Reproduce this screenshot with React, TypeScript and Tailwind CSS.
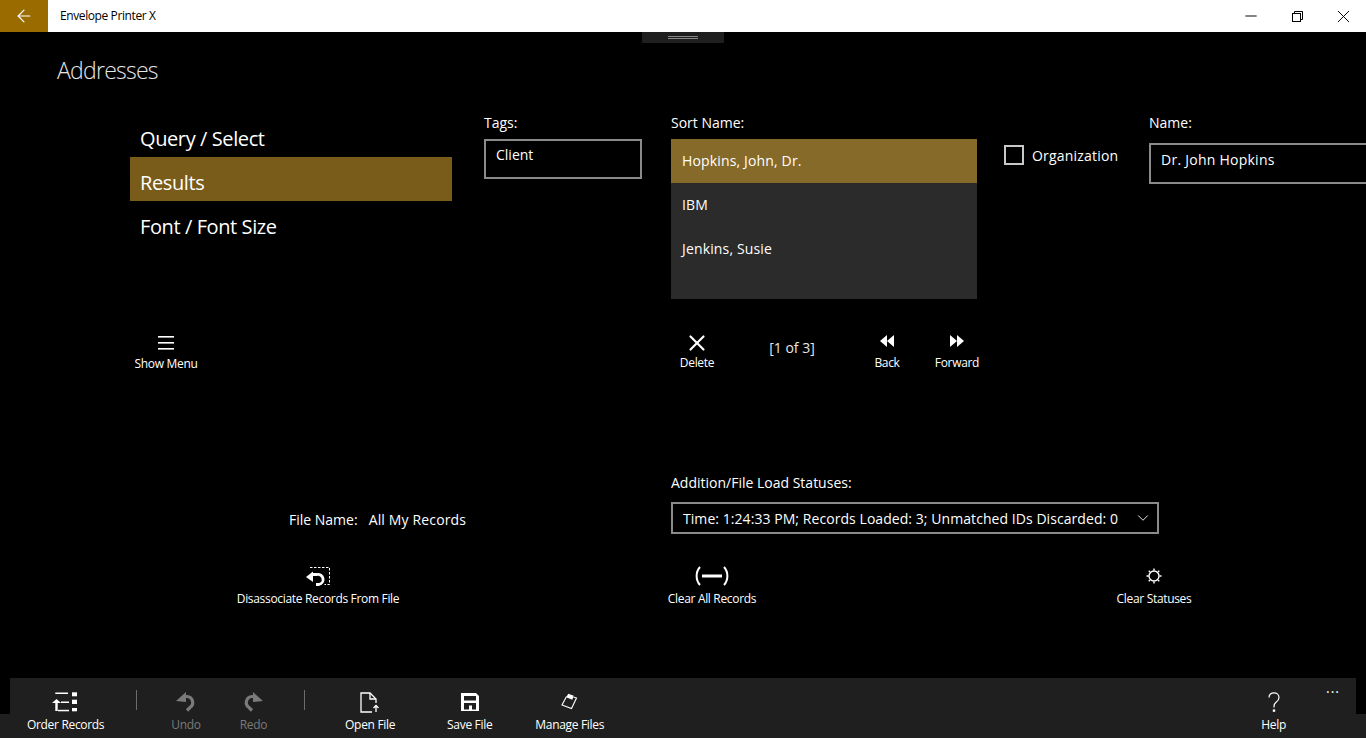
import { ArrowLeft, ChevronDown, Minus, X } from "lucide-react";
import type { ReactNode } from "react";

const font = "font-['Open_Sans','Noto_Sans',sans-serif]";

function NavItem({ text, active }: { text: string; active?: boolean }) {
  return (
    <div className={`flex h-11 items-center px-[10px] pt-2 text-[20px] tracking-[-0.4px] text-white ${active ? "bg-[#7a5c1a]" : ""}`}>
      {text}
    </div>
  );
}

function SortItem({ text, active }: { text: string; active?: boolean }) {
  return (
    <div className={`flex h-11 items-center px-[11px] pb-[2px] text-[14px] tracking-[0.15px] text-white ${active ? "bg-[#866a2a]" : ""}`}>
      {text}
    </div>
  );
}

function Action({
  icon,
  label,
  className = "",
  labelClassName = "",
  muted,
}: {
  icon: ReactNode;
  label: string;
  className?: string;
  labelClassName?: string;
  muted?: boolean;
}) {
  return (
    <div className={`flex flex-col items-center ${muted ? "text-[#7a7a7a]" : "text-white"} ${className}`}>
      <div className="flex h-[22px] items-center justify-center">{icon}</div>
      <div className={`whitespace-nowrap text-[12px] leading-[16px] tracking-[-0.32px] ${labelClassName}`}>{label}</div>
    </div>
  );
}

function Hamburger() {
  return (
    <svg width="16" height="16" viewBox="0 0 16 16" fill="currentColor">
      <rect x="0" y="1" width="16" height="1.6" />
      <rect x="0" y="7" width="16" height="1.6" />
      <rect x="0" y="13" width="16" height="1.6" />
    </svg>
  );
}

function BackIcon() {
  return (
    <svg width="14" height="12" viewBox="0 0 14 12" fill="currentColor">
      <path d="M7 0v12L0 6z" />
      <path d="M14 0v12L7 6z" />
    </svg>
  );
}

function ForwardIcon() {
  return (
    <svg width="14" height="12" viewBox="0 0 14 12" fill="currentColor">
      <path d="M0 0v12l7-6z" />
      <path d="M7 0v12l7-6z" />
    </svg>
  );
}

function DisassociateIcon() {
  return (
    <svg width="24" height="20" viewBox="0 0 24 20" fill="none" stroke="currentColor">
      <path d="M4 1.500h19.500v17h-5" strokeDasharray="2.500 1.500" />
      <path d="M6 8.500h5a5 5 0 0 1 2 10h-3" strokeWidth="2.800" />
      <path d="M7 5.500v10.500L0 11z" fill="currentColor" stroke="none" />
    </svg>
  );
}

function ClearIcon() {
  return (
    <svg width="34" height="20" viewBox="0 0 34 20" fill="none" stroke="currentColor">
      <path d="M5 1C0.500 6 0.500 14 5 19" strokeWidth="2" />
      <path d="M29 1c4.500 5 4.500 13 0 18" strokeWidth="2" />
      <path d="M7 10h20" strokeWidth="3" />
    </svg>
  );
}

function GearIcon() {
  return (
    <svg width="18" height="18" viewBox="0 0 18 18" fill="none" stroke="currentColor">
      <circle cx="9" cy="9" r="5" strokeWidth="1.400" />
      <path d="M9 1.500v2M9 14.500v2M1.500 9h2M14.500 9h2M3.700 3.700l1.400 1.400M12.900 12.900l1.400 1.400M3.700 14.300l1.400-1.400M12.900 5.100l1.400-1.400" strokeWidth="1.400" />
    </svg>
  );
}

function OrderIcon() {
  return (
    <svg width="26" height="20" viewBox="0 0 26 20" fill="currentColor" className="mr-[2px]">
      <rect x="3.300" y="0.500" width="12.700" height="1.500" />
      <rect x="20" y="0.300" width="5" height="4" />
      <rect x="9" y="9.500" width="8" height="1.500" />
      <rect x="20" y="7.700" width="5" height="4.300" />
      <rect x="6" y="17.800" width="11" height="1.500" />
      <rect x="20" y="16" width="5" height="3.300" />
      <path d="M0 11l4.500-4 4.500 4H5.700v8H3.300v-8z" />
    </svg>
  );
}

function UndoIcon() {
  return (
    <svg width="20" height="20" viewBox="0 0 20 20" fill="none" stroke="currentColor">
      <path d="M7 4.500h4a6 6 0 0 1 3 11l-3 3" strokeWidth="3.200" />
      <path d="M10 0v10L0 9z" fill="currentColor" stroke="none" />
    </svg>
  );
}

function RedoIcon() {
  return (
    <svg width="20" height="20" viewBox="0 0 20 20" fill="none" stroke="currentColor">
      <path d="M13 4.500H9a6 6 0 0 0-3 11l3 3" strokeWidth="3.200" />
      <path d="M10 0v10l10-1z" fill="currentColor" stroke="none" />
    </svg>
  );
}

function OpenIcon() {
  return (
    <svg width="20" height="21" viewBox="0 0 20 21" fill="none" stroke="currentColor" strokeWidth="1.300">
      <path d="M12 20H1V1h9l6 6v4" />
      <path d="M10 1v6h6" />
      <path d="M16 20v-6M13.500 16l2.500-2.500 2.500 2.500" />
    </svg>
  );
}

function SaveIcon() {
  return (
    <svg width="18" height="18" viewBox="0 0 18 18" fill="currentColor">
      <path d="M0 0h15l3 3v15H0zM3 3v4.500h12V3zM3 10v6.500h5v-4h3v4h4V10z" fillRule="evenodd" />
    </svg>
  );
}

function ManageIcon() {
  return (
    <svg width="18" height="18" viewBox="0 0 18 18" fill="none" stroke="currentColor" strokeWidth="1.100">
      <path d="M5.500 3.500 1 12l9.500 3.500 5-10.500-3-1" />
      <path d="M6 4l1.500-2.500 4.500 1.500-1 3z" fill="currentColor" />
    </svg>
  );
}

function HelpIcon() {
  return (
    <svg width="12" height="20" viewBox="0 0 12 20" fill="none" stroke="currentColor" strokeWidth="1.200">
      <path d="M1 5.500C1 2.500 3.200 0.800 6 0.800c2.800 0 5 2 5 4.700 0 2.200-1.200 3.400-2.700 4.500C6.800 11.100 6 12.200 6 14.500v1" />
      <rect x="5.400" y="18" width="1.200" height="1.200" fill="currentColor" />
    </svg>
  );
}

function RestoreIcon() {
  return (
    <svg width="11" height="11" viewBox="0 0 11 11" fill="none" stroke="currentColor">
      <rect x="0.500" y="2.500" width="8" height="8" />
      <path d="M2.500 2.500v-2h8v8h-2" />
    </svg>
  );
}

function Divider() {
  return <div className="h-5 w-px bg-[#6b6b6b]" />;
}

export default function App() {
  return (
    <div className={`flex h-[738px] w-[1366px] flex-col overflow-hidden bg-black text-white ${font}`}>
      {/* Title bar */}
      <div className="flex h-8 shrink-0 items-center bg-white text-black">
        <div className="flex h-8 w-12 items-center justify-center bg-[#9a6c00] text-white">
          <ArrowLeft size={20} strokeWidth={1.4} />
        </div>
        <div className="ml-3 text-[12px] tracking-[-0.4px]">Envelope Printer X</div>
        <div className="ml-auto flex">
          <div className="flex h-8 w-[46px] items-center justify-center"><Minus size={18} strokeWidth={1.3} /></div>
          <div className="flex h-8 w-[46px] items-center justify-center"><RestoreIcon /></div>
          <div className="flex h-8 w-[46px] items-center justify-center"><X size={21} strokeWidth={1.1} /></div>
        </div>
      </div>

      {/* Handle */}
      <div className="mx-auto flex h-[11px] w-[82px] shrink-0 flex-col items-center justify-center gap-px bg-[#1f1f1f]">
        <div className="h-px w-[30px] bg-[#888888]" />
        <div className="h-px w-[30px] bg-[#888888]" />
      </div>

      <div className="relative flex-1 pl-[57px]">
        <h1 className="mt-[10px] text-[23px] font-light leading-[34px] tracking-[-0.75px] text-[#e6e6e6]">Addresses</h1>

        {/* Top row */}
        <div className="mt-[26px] flex items-start pl-[73px]">
          <div className="w-[322px] shrink-0">
            <NavItem text="Query / Select" />
            <NavItem text="Results" active />
            <NavItem text="Font / Font Size" />
          </div>

          <div className="ml-8 w-[158px] shrink-0">
            <div className="h-[26px] text-[14px] leading-[20px]">Tags:</div>
            <div className="h-10 border-2 border-[#8a8a8a] px-[10px] pt-[3px] text-[14px]">Client</div>
          </div>

          <div className="ml-[29px] w-[306px] shrink-0">
            <div className="h-[26px] text-[14px] leading-[20px]">Sort Name:</div>
            <div className="h-40 bg-[#2b2b2b]">
              <SortItem text="Hopkins, John, Dr." active />
              <SortItem text="IBM" />
              <SortItem text="Jenkins, Susie" />
            </div>
          </div>

          <div className="ml-[27px] mt-[30px] flex w-[145px] shrink-0 items-center gap-2">
            <div className="h-5 w-5 border-2 border-[#c8c8c8]" />
            <div className="pt-[2px] text-[14px] tracking-[0.2px]">Organization</div>
          </div>

          <div className="w-[240px] shrink-0">
            <div className="h-[30px] text-[14px] leading-[20px]">Name:</div>
            <div className="h-[41px] border-2 border-[#8a8a8a] px-[10px] pt-[4px] text-[14px] tracking-[0.25px]">Dr. John Hopkins</div>
          </div>
        </div>

        {/* Show menu + record pager */}
        <div className="mt-[31px] flex items-start pl-[73px]">
          <div className="flex w-[72px] justify-center pt-[2px]">
            <Action icon={<Hamburger />} label="Show Menu" labelClassName="mt-[2px]" />
          </div>
          <div className="ml-[470px] flex w-[50px] justify-center pt-[2px]">
            <Action icon={<X size={26} strokeWidth={2} />} label="Delete" labelClassName="mt-[1px]" />
          </div>
          <div className="ml-[35px] flex w-[70px] justify-center pt-[7px] text-[14px] text-[#e6e6e6]">[1 of 3]</div>
          <div className="ml-[35px] flex w-[50px] justify-center">
            <Action icon={<BackIcon />} label="Back" labelClassName="mt-[3px]" />
          </div>
          <div className="ml-[20px] flex w-[50px] justify-center">
            <Action icon={<ForwardIcon />} label="Forward" labelClassName="mt-[3px]" />
          </div>
        </div>

        {/* Status row */}
        <div className="mt-[101px] flex items-end pl-[232px]">
          <div className="flex w-[382px] gap-[11px] pb-[4px] text-[14px]">
            <span>File Name:</span>
            <span className="tracking-[0.15px]">All My Records</span>
          </div>
          <div>
            <div className="h-[29px] text-[14px] leading-[20px]">Addition/File Load Statuses:</div>
            <div className="flex h-8 w-[488px] items-center justify-between border-2 border-[#8a8a8a] pl-[10px] pr-[5px] text-[14px] tracking-[0.06px]">
              <span>Time: 1:24:33 PM; Records Loaded: 3; Unmatched IDs Discarded: 0</span>
              <ChevronDown size={18} strokeWidth={1.2} />
            </div>
          </div>
        </div>

        {/* Bulk actions */}
        <div className="mt-[31px] flex items-start pl-[180px]">
          <div className="flex w-[162px] justify-center">
            <Action icon={<DisassociateIcon />} label="Disassociate Records From File" labelClassName="mt-[4px]" />
          </div>
          <div className="ml-[268px] flex w-[90px] justify-center">
            <Action icon={<ClearIcon />} label="Clear All Records" labelClassName="mt-[4px]" />
          </div>
          <div className="ml-[357px] flex w-[80px] justify-center">
            <Action icon={<GearIcon />} label="Clear Statuses" labelClassName="mt-[4px]" />
          </div>
        </div>
      </div>

      {/* Command bar */}
      <div className="relative h-[60px] shrink-0 px-[10px]">
        <div className="absolute inset-x-0 bottom-0 h-6 bg-[#1f1f1f]" />
        <div className="relative flex h-[60px] items-start bg-[#1f1f1f] pt-[13px]">
          <Action icon={<OrderIcon />} label="Order Records" className="ml-[17px]" labelClassName="mt-[4px]" />
          <div className="ml-[32px] mt-[-1px]"><Divider /></div>
          <Action icon={<UndoIcon />} label="Undo" className="ml-[34px]" labelClassName="mt-[4px]" muted />
          <Action icon={<RedoIcon />} label="Redo" className="ml-[39px]" labelClassName="mt-[4px]" muted />
          <div className="ml-[37px] mt-[-1px]"><Divider /></div>
          <Action icon={<OpenIcon />} label="Open File" className="ml-[40px]" labelClassName="mt-[4px]" />
          <Action icon={<SaveIcon />} label="Save File" className="ml-[52px]" labelClassName="mt-[4px]" />
          <Action icon={<ManageIcon />} label="Manage Files" className="ml-[43px]" labelClassName="mt-[4px]" />
          <Action icon={<HelpIcon />} label="Help" className="ml-auto mr-[70px]" labelClassName="mt-[4px]" />
          <div className="absolute right-[16px] top-0 text-[14px] leading-[20px] tracking-[1px]">...</div>
        </div>
      </div>
    </div>
  );
}
